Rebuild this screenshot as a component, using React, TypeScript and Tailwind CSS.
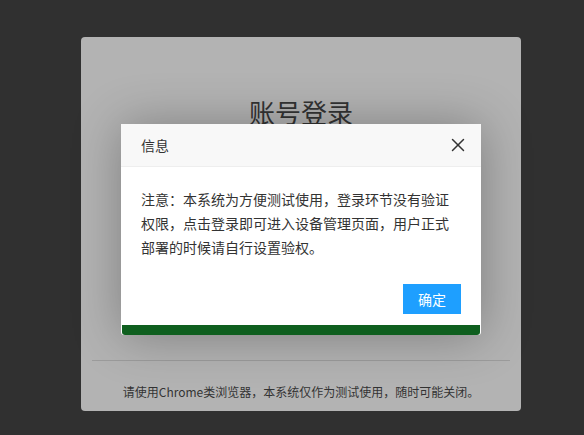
import { X } from "lucide-react";

const font = { fontFamily: '"Noto Sans CJK SC", "Noto Sans", sans-serif' };

export default function App() {
  return (
    <div
      className="relative min-h-[435px] w-full bg-[#303030] pl-[81px] pt-[37px]"
      style={font}
    >
      {/* login card, dimmed by the overlay */}
      <div className="flex h-[374px] w-[440px] flex-col rounded-[4px] bg-[#b3b3b3] px-[11px]">
        <h1 className="mt-[57px] text-center text-[26px] leading-[36px] text-[#333]">
          账号登录
        </h1>
        <div className="flex-1" />
        <div className="border-t border-[#9c9c9c]" />
        <p className="pt-[21px] pb-[9px] text-center text-[12px] leading-[20px] text-[#333]">
          请使用Chrome类浏览器，本系统仅作为测试使用，随时可能关闭。
        </p>
      </div>

      {/* dialog */}
      <div className="absolute left-[121px] top-[124px] w-[360px] overflow-hidden rounded-b-[3px] bg-white shadow-[1px_1px_50px_rgba(0,0,0,0.3)]">
        <div className="flex h-[43px] items-center justify-between border-b border-[#eee] bg-[#f8f8f8] pl-[20px] pr-[12px]">
          <span className="text-[14px] text-[#333]">信息</span>
          <X className="h-[22px] w-[22px] text-[#333]" strokeWidth={1.6} />
        </div>
        <div className="px-[20px] py-[20px] text-[14px] leading-[24px] text-[#333]">
          注意：本系统为方便测试使用，登录环节没有验证权限，点击登录即可进入设备管理页面，用户正式部署的时候请自行设置验权。
        </div>
        <div className="flex justify-end px-[20px] pt-[5px] pb-[11px]">
          <button className="h-[30px] bg-[#1e9fff] px-[15px] text-[14px] leading-[30px] text-white">
            确定
          </button>
        </div>
        <div className="mx-px h-[10px] rounded-b-[3px] bg-[#0f5f1f]" />
      </div>
    </div>
  );
}
